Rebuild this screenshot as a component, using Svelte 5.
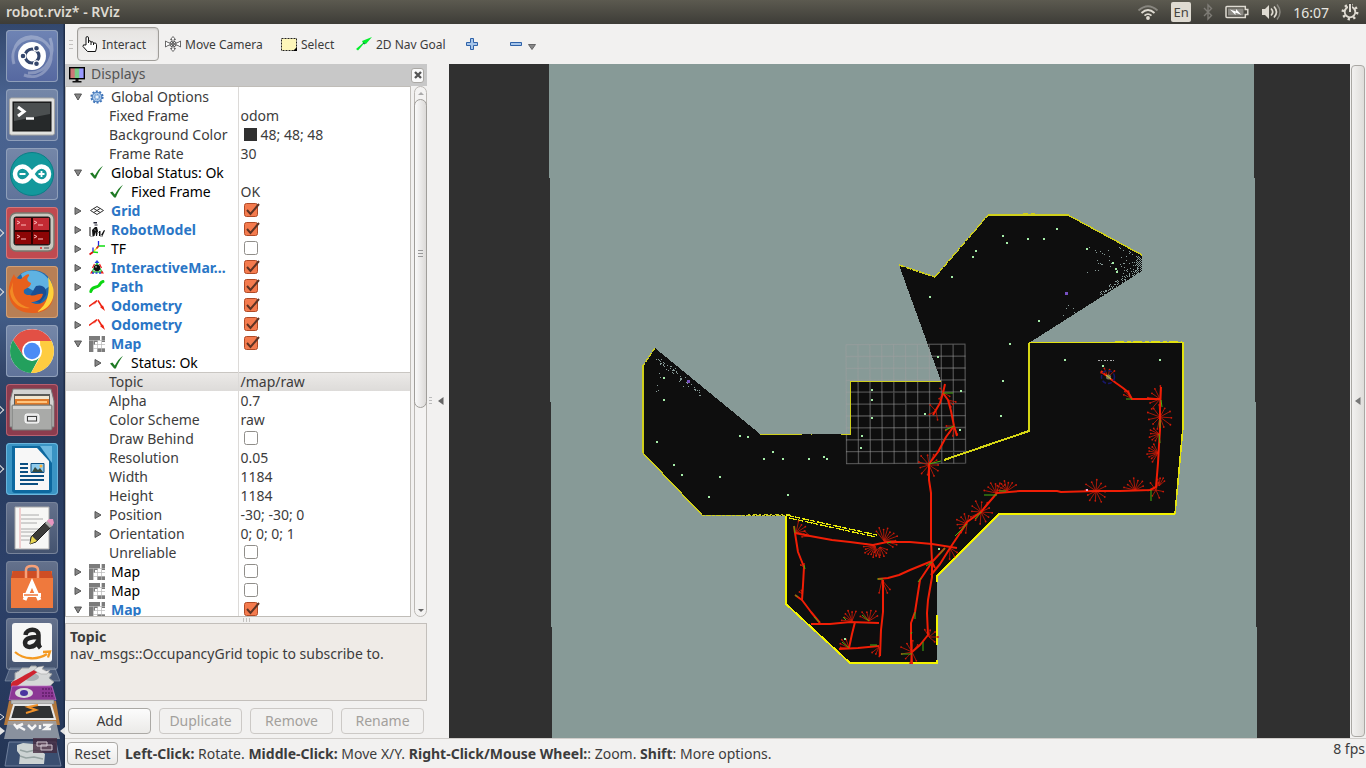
<script>
  const rows = [
    { n: 'Global Options', l: 0, a: 'open', i: 'gear' },
    { n: 'Fixed Frame', l: 1, v: 'odom' },
    { n: 'Background Color', l: 1, v: '48; 48; 48', swatch: true },
    { n: 'Frame Rate', l: 1, v: '30' },
    { n: 'Global Status: Ok', l: 0, a: 'open', i: 'ok', c: 'dark' },
    { n: 'Fixed Frame', l: 1, i: 'ok', c: 'dark', v: 'OK' },
    { n: 'Grid', l: 0, a: 'shut', i: 'grid', c: 'on', k: true },
    { n: 'RobotModel', l: 0, a: 'shut', i: 'robot', c: 'on', k: true },
    { n: 'TF', l: 0, a: 'shut', i: 'tf', c: 'dark', k: false },
    { n: 'InteractiveMar…', l: 0, a: 'shut', i: 'marker', c: 'on', k: true },
    { n: 'Path', l: 0, a: 'shut', i: 'path', c: 'on', k: true },
    { n: 'Odometry', l: 0, a: 'shut', i: 'odom', c: 'on', k: true },
    { n: 'Odometry', l: 0, a: 'shut', i: 'odom', c: 'on', k: true },
    { n: 'Map', l: 0, a: 'open', i: 'map', c: 'on', k: true },
    { n: 'Status: Ok', l: 1, a: 'shut', i: 'ok', c: 'dark' },
    { n: 'Topic', l: 1, v: '/map/raw', sel: true },
    { n: 'Alpha', l: 1, v: '0.7' },
    { n: 'Color Scheme', l: 1, v: 'raw' },
    { n: 'Draw Behind', l: 1, k: false },
    { n: 'Resolution', l: 1, v: '0.05' },
    { n: 'Width', l: 1, v: '1184' },
    { n: 'Height', l: 1, v: '1184' },
    { n: 'Position', l: 1, a: 'shut', v: '-30; -30; 0' },
    { n: 'Orientation', l: 1, a: 'shut', v: '0; 0; 0; 1' },
    { n: 'Unreliable', l: 1, k: false },
    { n: 'Map', l: 0, a: 'shut', i: 'map', c: 'dark', k: false },
    { n: 'Map', l: 0, a: 'shut', i: 'map', c: 'dark', k: false },
    { n: 'Map', l: 0, a: 'open', i: 'map', c: 'on', k: true }
  ];

  const apps = [
    { id: 'dash', name: 'Dash' },
    { id: 'term', name: 'Terminal' },
    { id: 'arduino', name: 'Arduino' },
    { id: 'terminator', name: 'Terminator', run: true },
    { id: 'firefox', name: 'Firefox', run: true },
    { id: 'chrome', name: 'Chrome' },
    { id: 'files', name: 'Files', run: true },
    { id: 'writer', name: 'Writer', run: true },
    { id: 'gedit', name: 'Text Editor' },
    { id: 'software', name: 'Software' },
    { id: 'amazon', name: 'Amazon' }
  ];

  const outline =
    '899,265 935,277 988,215 1068,215 1142,255 1142,271 1029,343 1183,342 1183,427 1175,514 999,514 937,576 937,663 850,663 786,604 786,516 702,515 643,453 643,366 655,348 760,434 850,434 850,381 941,381';

  const points = [
    [664,378],[664,400],[657,442],[674,465],[682,475],[709,497],[720,477],[740,436],[748,437],[764,459],
    [773,452],[783,459],[788,495],[809,459],[824,457],[827,459],[862,436],[861,448],[872,390],[872,400],
    [872,418],[925,414],[938,357],[961,391],[960,430],[1010,344],[1003,381],[1001,416],[1065,360],[1160,360],
    [1103,366],[1039,321],[1003,236],[1007,243],[1028,239],[1044,239],[1057,229],[1087,249],[976,251],
    [973,257],[952,277],[930,297],[1113,263],[1116,269],[1117,272],[939,549],[845,639]
  ];

  const tracks = [
    '945,384 943,393 940,403 933,415',
    '943,393 948,400 951,411 954,426 957,436',
    '954,426 946,437 938,452 929,464 929,480 931,493 931,540 932,562 935,568',
    '795,533 810,536 832,540 850,542 873,545 887,542 910,542 932,544 957,548',
    '794,526 795,533 798,552 804,567 803,585 802,600 811,612 820,623',
    '795,595 802,600',
    '811,624 830,624 850,622 879,623',
    '839,649 858,648 879,646',
    '855,622 852,634 849,648',
    '880,656 881,630 883,612 883,597 883,580',
    '878,579 888,578 899,575 910,570 932,561',
    '912,664 911,643 911,623 915,612 920,580 932,562 945,548',
    '932,562 932,577 928,600 927,613 928,635 920,645 912,652',
    '931,575 940,564 950,548 958,536 967,522 981,512 991,500 997,493 1020,491 1057,491 1061,492 1096,491 1120,491 1150,490 1156,487 1158,463 1159,445 1160,430 1160,410 1161,387',
    '1161,399 1148,399 1132,399 1128,392 1123,388 1116,383 1108,377 1101,371'
  ];

  const bursts = [
    [929,465,12,0,360,11],[981,512,12,0,360,12],[967,524,11,90,300,8],[996,493,12,180,330,6],[1007,491,11,185,350,7],
    [1096,491,12,0,360,12],[1135,490,12,185,350,7],[1156,490,9,0,330,6],[1160,399,13,130,300,6],[1160,417,13,0,360,11],
    [1159,434,10,110,240,6],[1158,453,11,110,250,8],[944,393,8,30,330,3],[948,400,8,10,90,3],[954,426,10,60,200,5],
    [950,548,11,20,110,3],[929,637,9,240,440,5],[912,652,12,60,340,8],[875,546,12,60,200,9],[884,541,14,220,400,10],
    [880,547,10,20,160,6],[852,621,11,180,310,6],[869,621,12,200,345,6],[796,533,12,270,380,5],[882,580,14,50,120,4],
    [849,648,11,180,270,4],[879,647,10,80,160,3],[1108,377,10,200,340,4],[936,411,9,80,300,3],[1131,398,9,200,270,3],
    [1159,486,9,250,330,4],[804,567,4,200,320,2],[802,594,4,220,300,2],[810,536,8,170,240,3]
  ];

  const rays = bursts.flatMap(([x, y, r, a, b, n], j) =>
    Array.from({ length: n }, (_, i) => {
      const t = ((a + ((b - a) * i) / n + (j % 4) * 4) * Math.PI) / 180;
      const q = r * (0.76 + ((i * 7 + j * 3) % 5) * 0.06);
      return [x, y, x + Math.cos(t) * q, y + Math.sin(t) * q];
    })
  );

  const greens = [
    '943,393 953,393','954,426 945,430','929,464 941,461','981,512 975,519','967,524 955,536','997,495 984,495',
    '1132,399 1126,399','1161,400 1162,407','1160,420 1160,428','1159,434 1160,443','1151,490 1151,501','794,526 795,533',
    '804,565 805,569','795,595 798,597','814,617 819,622','846,620 843,617','869,621 862,615','849,648 842,642',
    '870,645 877,645','883,579 877,579','932,562 926,566','939,555 945,548','921,578 918,582','915,612 915,619',
    '912,632 911,634','912,654 901,654','923,642 923,651','887,543 891,542','1006,491 999,491'
  ];

  function noise(seed) {
    let s = seed;
    return () => (s = (s * 16807) % 2147483647) / 2147483647;
  }

  // Unmapped cells: dense at the far right tip, thinning toward the room.
  const speckles = [];
  const r1 = noise(91);
  for (let x = 1120; x < 1142; x++) {
    const low = 271 + (1142 - x) * 0.637;
    const top = 255 - (1142 - x) * 0.54 + 3;
    for (let y = Math.ceil(top); y < low; y++) {
      const p = ((x - 1116) / 26) ** 2 * 0.42;
      if ((x + y) % 2 === 0 && r1() < p * 2) speckles.push([x, y]);
    }
  }
  for (let i = 0; i < 60; i++) {
    const x = 1100 + Math.round(38 * r1());
    speckles.push([x, Math.round(271 + (1142 - x) * 0.637 - 1 - 7 * r1())]);
  }
  for (let i = 0; i < 28; i++) speckles.push([Math.round(1086 + 38 * r1()), Math.round(246 + 30 * r1())]);
  for (let i = 0; i < 10; i++) speckles.push([Math.round(1058 + 30 * r1()), Math.round(316 - 14 * r1())]);
  for (let i = 0; i < 44; i++) {
    const u = r1();
    speckles.push([Math.round(655 + 45 * u), Math.round(354 + 36 * u + 6 * r1())]);
  }
  for (let i = 0; i < 14; i++) speckles.push([Math.round(653 + 32 * r1()), Math.round(362 + 30 * r1())]);

  const gridLines = Array.from({ length: 11 }, (_, i) => i);
</script>

{#snippet treeIcon(id)}
  <svg class="i16" viewBox="0 0 16 16" aria-hidden="true">
    {#if id === 'gear'}
      <circle cx="8" cy="8" r="5.6" fill="none" stroke="#3f74b8" stroke-width="2" stroke-dasharray="2 1.5" />
      <circle cx="8" cy="8" r="4.8" fill="#a9c7e8" stroke="#4379bd" />
      <circle cx="8" cy="8" r="2.6" fill="none" stroke="#5b8bc9" stroke-dasharray="1.4 1" />
      <circle cx="8" cy="8" r="1" fill="#fff" />
    {:else if id === 'ok'}
      <path d="M1 8.600 3.400 7.600 5.800 10.600C8 6.600 10.500 3.200 14 .800 11.200 4.800 8.800 8.800 6.800 13.600H5.200Z" fill="#1e7a24" />
    {:else if id === 'grid'}
      <path d="M1.500 7.500 8 3.500 14.500 7.500 8 11.500ZM4.700 5.500 11.200 9.500M11.200 5.500 4.700 9.500" fill="none" stroke="#333" />
    {:else if id === 'robot'}
      <path d="M4.500 0h3.500v1.500H4.500zM5.500 2.500h3v1h-3z" fill="#223" />
      <path d="M.500 5h1v9h-1zM3 8l3-3 2 0 1 4-1 5H7l-.500-4-1 4H3.500zM10 9h1.500v5H10zM12 13l3-5 1 .5-2.500 5.500z" fill="#111" />
      <path d="M5 7l2 1-1 1zM8 10h2v1H8zM11 14h3v.700h-3zM1 14h4v.700H1z" fill="#999" />
    {:else if id === 'tf'}
      <path d="M9.500 5.500V0" stroke="#22d" fill="none" stroke-width="1.300" /><path d="M9.500 5H16" stroke="#1d1" stroke-width="1.500" />
      <path d="M9.500 5.500 4.500 10.500" stroke="#ee2" stroke-width="1.500" /><path d="M9.500 5 7.500 7.500" stroke="#d22" stroke-width="1.500" />
      <path d="M4 11V6.500" stroke="#22d" stroke-width="1.300" /><path d="M4 11 9 11.500" stroke="#1d1" stroke-width="1.300" /><path d="M4 11 .5 13.500" stroke="#d11" stroke-width="1.800" />
    {:else if id === 'marker'}
      <path d="M3 12 8 3 13 12Z" fill="none" stroke="#28c040" stroke-width="1.300" />
      <path d="M8 0 10.500 3H5.500Z" fill="#24d" /><path d="m3.500 8 2-4M12.500 8l-2-4" stroke="#e22" stroke-width="1.200" /><path d="M1 13.500 3 10.500 4.500 13.500ZM15 13.500 13 10.500 11.500 13.500Z" fill="#e22" />
      <path d="M3 13h10" stroke="#24d" stroke-dasharray="2 1.500" stroke-width="1.500" />
      <circle cx="8" cy="8" r="3.200" fill="#111" /><circle cx="7" cy="6.800" r="1" fill="#999" />
    {:else if id === 'path'}
      <path d="M1.800 12.500C3 7 7 9.500 10 6.500 12 4 11.500 3 14 2.500" fill="none" stroke="#0cd512" stroke-width="3" stroke-linecap="round" />
    {:else if id === 'odom'}
      <path d="M0 8.500 8 2.500M9 2.500l5 8" fill="none" stroke="#e21" stroke-width="1.500" />
      <path d="M4 7 8.500 2 7 5ZM11 9 16 13 14 7.500Z" fill="#e21" />
    {:else if id === 'map'}
      <path d="M0 0h16v16H0z" fill="#fff" />
      <path d="M0 0h11v4H9v2H6v3H4v7H0zM13 0h3v6h-3zM8 12h8v4H8z" fill="#7c7c7c" />
      <path d="M4.500 4v12M8.500 4v12M12.500 0v16M4 8.500h12M4 12.500h12M0 4.500h16" stroke="#b9b9b9" stroke-width=".7" />
    {/if}
  </svg>
{/snippet}

{#snippet appIcon(id)}
  <svg viewBox="0 0 52 52" aria-hidden="true">
    {#if id === 'dash'}
      <path d="M8 34C2 14 22 2 38 11M18 45C36 52 50 34 44 16M44 8C50 24 42 44 22 43M9 18C14 4 34 2 44 18" fill="none" stroke="#fff" stroke-opacity=".28" stroke-width="3" />
      <circle cx="26" cy="26" r="14" fill="#fff" />
      <circle cx="26" cy="26" r="7" fill="none" stroke="#34466c" stroke-width="3.200" />
      <circle cx="17" cy="26" r="2.900" fill="#34466c" stroke="#fff" stroke-width="1.200" /><circle cx="30.500" cy="18.200" r="2.900" fill="#34466c" stroke="#fff" stroke-width="1.200" /><circle cx="30.500" cy="33.800" r="2.900" fill="#34466c" stroke="#fff" stroke-width="1.200" />
    {:else if id === 'term'}
      <rect x="3.500" y="9" width="45" height="37" rx="2" fill="#e1e1df" stroke="#a6a6a4" />
      <rect x="7" y="13" width="38" height="29" fill="#26292a" stroke="#111" /><path d="M8 14h36v11L8 32Z" fill="#4b4f50" />
      <path d="m12 18 6 4.500-6 4.500" fill="none" stroke="#fff" stroke-width="3" /><path d="M20 29.500h8" stroke="#fff" stroke-width="2.500" />
    {:else if id === 'arduino'}
      <circle cx="26" cy="26" r="21.500" fill="#13989c" stroke="#0a7f86" />
      <path d="M26 26C22 19.500 18.500 18.500 16.500 18.500a7.500 7.500 0 0 0 0 15C21 33.500 23.500 30 26 26S31 18.500 35.500 18.500a7.500 7.500 0 0 1 0 15C31 33.500 28.500 30 26 26Z" fill="none" stroke="#fff" stroke-width="4.500" />
      <path d="M13.500 26h6M32.500 26h6M35.500 23v6" stroke="#fff" stroke-width="1.800" />
    {:else if id === 'terminator'}
      <rect x="4" y="6" width="44" height="38" rx="6" fill="#c9c9c0" stroke="#78786e" stroke-width="1.500" />
      <rect x="8" y="10" width="36" height="28" rx="2" fill="#300" stroke="#222" /><path d="M9 11h16v12H9zM27 11h16v12H27z" fill="#c22a33" /><path d="M9 25h16v12H9zM27 25h16v12H27z" fill="#8c0505" />
      <path d="m11 14 3 1.500-3 1.500m4 1h5m8-4 3 1.500-3 1.500m4 1h5M11 28l3 1.500-3 1.500m4 1h5m8-4 3 1.500-3 1.500m4 1h5" fill="none" stroke="#fbb" stroke-width="1" />
      <circle cx="35" cy="41" r="1" fill="#e22" /><path d="M38 41h5" stroke="#777" stroke-width="1.500" />
    {:else if id === 'firefox'}
      <circle cx="27" cy="24" r="20" fill="#2168ab" /><path d="M15 8C27 0 42 7 45 19L33 28 19 20Z" fill="#5fb2e2" /><path d="M30 20c7-2 11 2 10 9l-6 8-12-4Z" fill="#1a4f93" />
      <path d="M8 8C9 12 12 13 15 13 20 8 24 7 23 10 20 13 21 15 25 17 25 21 20 22 18 24 17 28 20 29 24 29 29 31 32 27 37 28 36 34 30 36 25 36 36 43 47 31 43 14 51 25 50 47 26 47 3 47-3 26 8 8Z" fill="#e8601c" />
      <path d="M42 11C52 24 49 42 31 46 42 38 44 27 42 11Z" fill="#ffd23b" /><path d="M7 16C5 29 11 39 24 42 15 44 4 36 4 25Z" fill="#f28a25" />
    {:else if id === 'chrome'}
      <circle cx="26" cy="26" r="22" fill="#fff" /><path d="M7 15A22 22 0 0 1 45.500 16H26L17.400 31Z" fill="#e25045" /><path d="M7 15A22 22 0 0 0 25 48L34 31 26 36 17.400 31Z" fill="#23a05d" />
      <path d="M45.500 16A22 22 0 0 1 25 48L34.700 31 34 16Z" fill="#fecc40" /><circle cx="26" cy="26" r="10" fill="#fff" /><circle cx="26" cy="26" r="8.200" fill="#4b8bf5" />
    {:else if id === 'files'}
      <path d="M7 5h38l3 12v26H4V17Z" fill="#d3d3d1" stroke="#777" /><path d="M8 10h36v12H8z" fill="#5c5c58" />
      <path d="M9 12h34v3H9z" fill="#f1e6cf" /><path d="M9 15h34v8H9z" fill="#df7a2a" /><path d="M11 18h30" stroke="#ffc37b" stroke-width="2" />
      <rect x="6" y="21" width="40" height="25" rx="1" fill="#a9aaa8" stroke="#737472" /><path d="M7 22h38v3H7z" fill="#d4d4d2" />
      <rect x="19" y="30" width="14" height="9" rx="2" fill="#ddd" stroke="#fff" /><rect x="21.500" y="32.500" width="9" height="4.500" fill="#eee" stroke="#444" />
    {:else if id === 'writer'}
      <path d="M6 3h32l8 10v34a3 3 0 0 1-3 3H9a3 3 0 0 1-3-3Z" fill="#0d689f" /><path d="M34 3h12v17Z" fill="#6db9e0" /><path d="M9 5h22l12 13v29H9Z" fill="#f7f7f7" />
      <path d="M14 21h8M14 25h8M14 29h8M14 33h24M14 37h24M14 41h18" stroke="#0b4f82" stroke-width="2" /><path d="M25 20.500h13v9H25z" fill="#8ecbed" stroke="#0b4f82" /><path d="m26 29 3-5 3 3 2-2 3 4Z" fill="#374b40" /><circle cx="35" cy="23" r="1.500" fill="#ffb43b" />
    {:else if id === 'gedit'}
      <path d="M9 5h34v42H9z" fill="#f7f7f5" stroke="#aaa" /><path d="M14 6v40" stroke="#eaa7aa" /><path d="M15 13h18M15 17h22M15 21h16M15 27h20M15 30h18M15 34h14M15 38h12" stroke="#aaa" />
      <path d="M25 35 40 20 45 25 30 40 24 42Z" fill="#3c3c3a" stroke="#222" /><path d="m26 34 5 5-7 3Z" fill="#e8d651" /><path d="m39 21 3-3 5 5-3 3Z" fill="#aaa" /><path d="m41 19 2-2 4 0 1 4-2 3Z" fill="#e895c0" />
    {:else if id === 'software'}
      <path d="M6 10h40v36H5z" fill="#e96a30" /><path d="M5 17h42v30H5z" fill="#ef793d" /><path d="M5 17 7 10h38l2 7Z" fill="#cf4e24" /><path d="M20 17V9q0-4 6-4t6 4v8" fill="none" stroke="#f6a078" stroke-width="2.500" />
      <path d="M18.500 39 26 22l7.500 17" fill="none" stroke="#fff" stroke-width="4" /><path d="M17 34h18" stroke="#fff" stroke-width="4" /><path d="M18 34h14" stroke="#ef793d" stroke-width="1.500" />
    {:else if id === 'amazon'}
      <rect x="6" y="5" width="40" height="39" rx="3" fill="#f7f7f6" />
      <path d="M19.500 17c1-7 13-7 13 0v8c0 3 1 4 2 5M32 19c-9 0-13 2-13 6 0 6 10 5 13-2" fill="none" stroke="#262626" stroke-width="4.500" />
      <path d="M9 34c9 8 23 8 32 2M37 34l7-.500-2 6" fill="none" stroke="#f49a22" stroke-width="2.300" />
    {/if}
  </svg>
{/snippet}

<div class="desktop">
  <header class="topbar">
    <h1>robot.rviz* - RViz</h1>
    <div class="tray">
      <svg width="22" height="18" viewBox="0 0 22 18" fill="none" stroke="#dfdbd2" stroke-width="1.800"><path d="M1.500 7.500Q11-1 20.500 7.500" stroke="#88867f" /><path d="M4.500 10Q11 4 17.500 10" /><path d="M7.500 12.700Q11 9.500 14.500 12.700" /><circle cx="11" cy="15" r="1" fill="#dfdbd2" /></svg>
      <span class="lang">En</span>
      <svg width="10" height="18" viewBox="0 0 10 18" fill="none" stroke="#7e7c76" stroke-width="1.400"><path d="M1 5 8.500 12.500 5 16V2L8.500 5.500 1 13" /></svg>
      <svg width="24" height="14" viewBox="0 0 24 14"><path d="M1.800 1.500h18.500v3h2.500v5h-2.500v3H1.800Q1 12.500 1 11.500v-9Q1 1.500 1.800 1.500Z" fill="none" stroke="#dfdbd2" stroke-width="1.500" /><path d="M3 3.500h15.500v7H3z" fill="#8c8a84" /><path d="m5 4.500 6 2V4l5.500 6-6-2.500v2.500Z" fill="#fff" /></svg>
      <svg width="20" height="18" viewBox="0 0 20 18"><path d="M1 6h3l4-4v14l-4-4H1z" fill="#dfdbd2" /><path d="M10 5.500q3.500 3.500 0 7M13 3.500q5 5.500 0 11" fill="none" stroke="#dfdbd2" stroke-width="1.700" /><path d="M16 1.500q6 7.500 0 15" fill="none" stroke="#88867f" stroke-width="1.500" /></svg>
      <time>16:07</time>
      <svg width="18" height="18" viewBox="0 0 18 18"><circle cx="9" cy="9" r="7.200" fill="none" stroke="#dfdbd2" stroke-width="2.500" stroke-dasharray="2.300 3.350" /><circle cx="9" cy="9" r="5.300" fill="none" stroke="#dfdbd2" stroke-width="1.800" /><path d="M7 0h4v8H7z" fill="#4a4943" /><path d="M9 1v8" stroke="#dfdbd2" stroke-width="2" /></svg>
    </div>
  </header>

  <div class="body">
    <nav class="launcher" aria-label="Launcher">
      {#each apps as app}
        <button class="tile {app.id}" class:run={app.run} aria-label={app.name}>{@render appIcon(app.id)}</button>
      {/each}
      <svg class="stack" viewBox="0 0 65 98" aria-hidden="true">
        <path d="M10 0h45l5 13H5Z" fill="#8490a6" fill-opacity=".4" stroke="#9aa8bd" stroke-opacity=".5" />
        <path d="m15 5 4-2 3-3h7l2-2h5l2 3 5 0 4 3 5 2-3 4 5 4-4 4-7 1-3 2H19l-4-3-4-3 4-4Z" fill="#d5d7d7" stroke="#9a9ea0" /><ellipse cx="31" cy="9" rx="8" ry="4" fill="#aab0b4" />
        <path d="M11 16Q12 13 16 12L34 2l5 1L20 16 14 20Q10 20 11 16Z" fill="#cf2430" /><path d="m34 2 4-3 6-1-2 3 4 2 4-1-3 4-6 0-4-2Z" fill="#e8e8e8" stroke="#999" stroke-width=".5" />
        <path d="M12 18h40l4 14H9Z" fill="#8c3795" stroke="#c374c9" stroke-width=".7" /><ellipse cx="24" cy="25" rx="9" ry="5" fill="#dadada" /><ellipse cx="24" cy="25" rx="4" ry="3" fill="#4b349f" /><path d="M42 21h10M42 25h11M42 28h12" stroke="#4b1353" stroke-dasharray="2 1" />
        <path d="M9 33h47l4 24H4Z" fill="#b5793c" /><path d="M11 32h43v4H11z" fill="#bbb" stroke="#777" stroke-width=".6" />
        <path d="M14 37h37l4 14H10Z" fill="#2f3133" stroke="#e7e7e7" stroke-width="2" /><path d="M38 37 28 39l8 3-10 3" fill="none" stroke="#f0912a" stroke-width="2" />
        <path d="M8 53h48l4 18H4Z" fill="#9ba1aa" fill-opacity=".85" /><path d="m14 56 4 5m5-5-5 2 7 4m3-5 4 4 4-4m4 0v4m3-4h7l-5 4h6" fill="none" stroke="#f5f5f5" stroke-width="2.500" />
        <path d="M9 74h47l5 24H5Z" fill="#3a4e70" stroke="#6f7f9c" /><path d="m17 77 6-2 12 1 8 1-2 6 4 3-1 10H19l1-9-3-4Z" fill="#cdd3d3" /><path d="m20 82 7 2 8-2 7 2M20 88l6 2 8-1 9 2" fill="none" stroke="#97a3a2" stroke-width="1.500" />
        <path d="M33 70h24v15H33z" fill="#452b40" fill-opacity=".8" /><path d="M37 74h10v4H37zM41 77h11v5H41z" fill="#604a5c" stroke="#d4c8d2" />
        <path d="m0 46 4 3-4 3" fill="none" stroke="#e4e4e4" /><path d="m0 59 5 4-5 4zM65 59l-5 4 5 4z" fill="#e4e4e4" />
      </svg>
    </nav>

    <main class="window">
      <div class="toolbar" role="toolbar">
        <i class="grip"></i>
        <button class="tool interact active"><svg class="i16" viewBox="0 0 16 16"><path d="M4 9V2q0-1.500 1.200-1.500T6.500 2v5V5q2-1 2.500 1 2-1 2.500 1 3-.5 3 1.500V12l-1 3.500H5.500L1 10.500Q.500 8 4 9Z" fill="#fff" stroke="#111" /><path d="M9 6v3M11.500 7v2" stroke="#111" /></svg>Interact</button>
        <button class="tool camera"><svg class="i16" viewBox="0 0 16 16" fill="#fff" stroke="#444" stroke-width=".8"><circle cx="8" cy="8" r="3" /><path d="M8 .500 10.500 3.500H9V6H7V3.500H5.500ZM8 15.500 10.500 12.500H9V10H7v2.500H5.500ZM.500 8V5L3 6.500 5 7v2l-2 .5L.5 11ZM15.500 8V5L13 6.500 11 7v2l2 .5 2.500 1.500Z" /><circle cx="8" cy="8" r="1.500" fill="#888" /></svg>Move Camera</button>
        <button class="tool select"><svg class="i16" viewBox="0 0 16 16"><rect x=".500" y="2.500" width="15" height="12" fill="#fdf6b9" stroke="#222" stroke-dasharray="2 1" /><path d="M16 11v4h-4z" fill="#000" /></svg>Select</button>
        <button class="tool nav"><svg class="i16" viewBox="0 0 16 16"><path d="m0 13 7-6-1-2 10-4-6 7-2-.5L2 14.500Z" fill="#05ee2d" /><path d="m7 7 2 1" stroke="#064" /></svg>2D Nav Goal</button>
        <button class="tool plus" aria-label="Add tool"><svg class="i12" viewBox="0 0 12 12"><path d="M4.500.500h3v4h4v3h-4v4h-3v-4h-4v-3h4z" fill="#a6c5ea" stroke="#2f62a8" /></svg></button>
        <button class="tool minus" aria-label="Remove tool"><svg class="i12" viewBox="0 0 12 12"><path d="M.500 4.500h11v3H.500z" fill="#a6c5ea" stroke="#2f62a8" /></svg><svg class="drop" viewBox="0 0 8 6"><path d="M.500.500h7L4 5.500Z" fill="#888" stroke="#666" /></svg></button>
      </div>

      <div class="content">
        <section class="panel">
          <div class="head">
            <svg class="i16" viewBox="0 0 16 16"><defs><linearGradient id="scr"><stop offset=".3" stop-color="#c77" /><stop offset=".4" stop-color="#7c8" /><stop offset=".6" stop-color="#7c8" /><stop offset=".7" stop-color="#99f" /></linearGradient></defs><rect x=".700" y=".700" width="14.600" height="11" fill="url(#scr)" stroke="#000" stroke-width="1.400" /><path d="M6.500 12h3v2h3v1.500h-9V14h3z" fill="#111" /></svg>
            <h2>Displays</h2>
            <button class="close" aria-label="Close"><svg viewBox="0 0 8 8"><path d="m1 1 6 6M7 1 1 7" stroke="#555" stroke-width="2.400" /></svg></button>
          </div>
          <div class="treewrap">
            <div class="tree">
              <table>
                <colgroup><col class="names" /><col /></colgroup>
                <tbody>
                  {#each rows as r, i}
                    <tr class:sel={r.sel}>
                      <th scope="row"><div class="cell {r.c ?? ''}" class:sub={r.l === 1}>
                        <span class="arrow">{#if r.a}<svg viewBox="0 0 8 8"><path d={r.a === 'open' ? 'M.500 1h7L4 7Z' : 'M1 .500v7L7 4Z'} fill="#858585" stroke="#555" /></svg>{/if}</span>
                        {#if r.i}{@render treeIcon(r.i)}{/if}
                        <span id="p{i}">{r.n}</span>
                      </div></th>
                      <td><div class="value">
                        {#if r.swatch}<i class="swatch"></i>{/if}
                        {#if r.k !== undefined}<input type="checkbox" checked={r.k} aria-labelledby="p{i}" />{:else}{r.v ?? ''}{/if}
                      </div></td>
                    </tr>
                  {/each}
                </tbody>
              </table>
            </div>
            <div class="scroll">
              <i class="up"></i>
              <div class="thumb"><i></i></div>
              <i class="down"></i>
            </div>
          </div>
          <div class="split"><i></i></div>
          <div class="desc"><b>Topic</b><p>nav_msgs::OccupancyGrid topic to subscribe to.</p></div>
          <div class="actions">
            <button class="btn">Add</button>
            <button class="btn" disabled>Duplicate</button>
            <button class="btn" disabled>Remove</button>
            <button class="btn" disabled>Rename</button>
          </div>
        </section>

        <button class="collapse" aria-label="Hide left dock"><i></i><svg viewBox="0 0 6 8"><path d="M5.500 0v8L0 4Z" fill="#666" /></svg></button>

        <svg class="view" viewBox="449 64 901 674" preserveAspectRatio="xMidYMid slice" role="img" aria-label="Map view">
          <g shape-rendering="crispEdges">
            <path d="M549 64H1254L1257 738H552Z" fill="#879a97" />
            <polygon points={outline} fill="#0e0e0e" />
            {#each speckles as [x, y]}<rect {x} {y} width="1" height="1" fill="#879a97" />{/each}
          </g>
          <g stroke="#a0a0a0" stroke-opacity=".45" stroke-width="1.300">
            {#each gridLines as g}
              <path d="M{846 + g * 11.9} 344.500L{846.6 + g * 11.9} 463.500M846 {344.6 + g * 11.9}L965.500 {344.2 + g * 11.9}" />
            {/each}
          </g>
          <g fill="none" shape-rendering="crispEdges">
            <path d="M899 265 935 277" stroke="#cfcf1c" stroke-width="1.400" stroke-dasharray="6 1" />
            <path d="M935 277 988 215" stroke="#cfcf1c" stroke-width="1.400" stroke-dasharray="7 1 4 1" />
            <path d="M988 215H1068L1142 255" stroke="#cfcf1c" stroke-width="1.400" />
            <path d="M989 214h3M1023 213h5m3 0h4m2 1h4M1054 214h2" stroke="#cfcf1c" />
            <path d="M655 348 643 366" stroke="#cfcf1c" stroke-width="1.400" stroke-dasharray="5 1" />
            <path d="M643 366V453L702 515" stroke="#cfcf1c" stroke-width="1.400" />
            <path d="M702 515.500H786" stroke="#cfcf1c" stroke-dasharray="3 1 5 1" />
            <path d="M748 514.500H790" stroke="#cfcf1c" stroke-dasharray="2 3 4 2" />
            <path d="M760 434.500H802M811 434.500H812M841 434.500H850.500V381.500H941" stroke="#cfcf1c" stroke-width="1.500" />
            <path d="M1029 343V431L944 460" stroke="#d6d614" stroke-width="2" />
            <path d="M1029 342.500H1183V427L1175 514" stroke="#e2e210" stroke-width="1.600" />
            <path d="M1115 341.500h67" stroke="#e2e210" stroke-dasharray="9 3 4 2" />
            <path d="M1127 343.500h52" stroke="#0e0e0e" stroke-dasharray="5 7" />
            <path d="M1175 514H999L937 576V582M937 615V645M937 660V663H850L786 604V516" stroke="#f4f400" stroke-width="1.800" />
            <path d="M786 515 877 535M789 518 876 537" stroke="#eaea08" stroke-dasharray="8 1 5 2" stroke-width="1.300" />
          </g>
          <g fill="none" stroke-linejoin="round">
            <g stroke="#cc1a08" stroke-width=".8">
              {#each rays as [x1, y1, x2, y2]}<line {x1} {y1} {x2} {y2} />{/each}
            </g>
            {#each rays as [, , x, y]}<circle cx={x} cy={y} r=".9" fill="#cc1a08" />{/each}
            {#each tracks as t}<polyline points={t} stroke="#f01e06" stroke-width="2" />{/each}
            {#each greens as t}<polyline points={t} stroke="#48b010" stroke-width="1" />{/each}
          </g>
          <circle cx="1108" cy="377" r="6.500" fill="none" stroke="#171768" stroke-width="1.500" stroke-dasharray="4 2" />
          <circle cx="1108.500" cy="377" r="2.500" fill="#77745c" /><path d="M1106 375l5 4" stroke="#d8c620" />
          <g shape-rendering="crispEdges" fill="#a5eda8">
            {#each points as [x, y]}<rect x={x - 1} y={y - 1} width="2" height="2" />{/each}
            <rect x="687" y="380" width="3" height="3" fill="#7650c0" /><rect x="1065" y="292" width="3" height="3" fill="#7650c0" /><rect x="1086" y="489" width="2" height="2" fill="#e6a5d4" />
            <path d="M1098 360.500h16" stroke="#aaa" stroke-dasharray="2 1 1 2" />
          </g>
        </svg>

        <button class="rightdock" aria-label="Hide right dock"><svg viewBox="0 0 6 8"><path d="M5.500 0v8L0 4Z" fill="#777" /></svg></button>
      </div>

      <footer class="status">
        <button class="btn reset">Reset</button>
        <p><b>Left-Click:</b> Rotate. <b>Middle-Click:</b> Move X/Y. <b>Right-Click/Mouse Wheel:</b>: Zoom. <b>Shift</b>: More options.</p>
        <span class="fps">8 fps</span>
      </footer>
    </main>
  </div>
</div>

<style>
  :global(body) { margin: 0; }
  * { box-sizing: border-box; }
  .desktop { height: 100vh; display: flex; flex-direction: column; overflow: hidden; font: 14px/19px "Noto Sans", "Open Sans", sans-serif; color: #3c3c3c; background: #f2f1f0; }
  button { font: inherit; color: inherit; margin: 0; padding: 0; border: 0; background: none; }
  h1, h2, p { margin: 0; font-size: 14px; }
  svg { display: block; flex: none; }
  .i16 { width: 16px; height: 16px; }
  .i12 { width: 12px; height: 12px; }

  .topbar { flex: none; height: 24px; display: flex; align-items: center; justify-content: space-between; padding: 0 7px 0 6px; color: #dfdbd2; background: linear-gradient(#5c5a50, #3d3c37); }
  h1 { font-size: 14px; line-height: 22px; font-weight: 600; }
  .tray { display: flex; align-items: center; gap: 12px; }
  .lang { width: 20px; height: 20px; border-radius: 2px; background: #dfdbd2; color: #45443f; font-size: 13px; line-height: 20px; text-align: center; }
  time { color: #e8e6e0; }

  .body { flex: 1; min-height: 0; display: flex; }
  .launcher { flex: none; width: 65px; padding: 6px 0 0 6px; display: flex; flex-direction: column; gap: 7px; overflow: hidden; background: linear-gradient(90deg, transparent 63px, #1d2c48 64px), linear-gradient(#33486e 0, #4a6390 10%, #44608c 38%, #35486c 46%, #263a5c 55%, #2d416a 75%, #243555); }
  .tile { position: relative; flex: none; width: 52px; height: 52px; border-radius: 4px; background: linear-gradient(#7587a8, #60739a); box-shadow: inset 0 0 0 1px #8f9fba; }
  .tile svg { width: 52px; height: 52px; }
  .dash { background: linear-gradient(#6f84b4, #5668a0); }
  .terminator { background: #c04a50; box-shadow: inset 0 0 0 1px #d4777a; }
  .firefox { background: #b87f55; box-shadow: inset 0 0 0 1px #d0a078; }
  .files { background: #8b3c4e; box-shadow: inset 0 0 0 1px #b56070; }
  .writer { background: #3a94c4; box-shadow: inset 0 0 0 1px #69b5dc; }
  .gedit, .software, .amazon { background: linear-gradient(#65728d, #44536f); box-shadow: inset 0 0 0 1px #77839a; }
  .amazon { margin-top: -2px; }
  .run::before { content: ""; position: absolute; left: -9px; top: 23px; width: 5px; height: 5px; border: solid #ddd; border-width: 1px 1px 0 0; transform: rotate(45deg); }
  .stack { position: relative; width: 65px; height: 98px; margin: -9px 0 0 -6px; overflow: visible; }

  .window { flex: 1; min-width: 0; display: flex; flex-direction: column; }
  .toolbar { flex: none; height: 40px; display: flex; align-items: center; padding-left: 4px; font-size: 12px; }
  .grip { width: 4px; height: 9px; margin-right: 4px; background: repeating-linear-gradient(#c4c2c0 0 1px, transparent 1px 4px); }
  .tool { height: 34px; padding: 0 5px; display: flex; align-items: center; gap: 4px; white-space: nowrap; }
  .interact { width: 82px; margin-right: 1px; }
  .camera { width: 116px; }
  .select { width: 75px; }
  .nav { width: 105px; }
  .plus { width: 44px; padding: 0 10px; }
  .minus { padding: 0 10px; gap: 6px; }
  .drop { width: 8px; height: 6px; margin-top: 6px; }
  .active { border: 1px solid #a09e9a; border-radius: 4px; background: linear-gradient(#e6e4e2, #f1f0ef); box-shadow: inset 0 1px 2px #c8c6c4; padding-left: 4px; }

  .content { flex: 1; min-height: 0; display: flex; }
  .panel { flex: none; width: 362px; display: flex; flex-direction: column; }
  .head { flex: none; height: 22px; display: flex; align-items: center; gap: 6px; padding: 0 3px 0 4px; background: #c8c8c8; }
  h2 { flex: 1; line-height: 18px; padding-bottom: 2px; font-weight: 400; color: #555; }
  .close { width: 13px; height: 15px; border: 1px solid #aaa8a4; border-radius: 3px; background: #fafafa; display: grid; place-items: center; }
  .close svg { width: 8px; height: 8px; }
  .treewrap { flex: 1; min-height: 0; display: flex; gap: 3px; }
  .tree { flex: 1; overflow: hidden; background: #fff; border: 1px solid #c0bdb8; }
  table { width: 100%; border-collapse: collapse; table-layout: fixed; }
  .names { width: 172px; }
  th, td { padding: 0; height: 19px; font-weight: 400; text-align: left; white-space: nowrap; }
  th { border-right: 1px solid #dcdad8; }
  .cell { height: 19px; padding-left: 2px; display: flex; align-items: center; }
  .cell.sub { padding-left: 22px; }
  .cell .i16 { margin-right: 6px; }
  .arrow { width: 21px; padding-left: 6px; flex: none; }
  .arrow svg { width: 8px; height: 8px; }
  .dark { color: #000; }
  .on { color: #2a76c6; font-weight: 700; }
  .value { height: 19px; padding-left: 2px; display: flex; align-items: center; }
  .swatch { width: 13px; height: 13px; margin: 0 4px 0 3px; background: #303030; }
  .sel { background: linear-gradient(#eceae8, #dddbd9); box-shadow: inset 0 1px 0 #c9c6c2; }
  input { appearance: none; width: 16px; height: 16px; margin: 0 0 0 3px; background: url("data:image/svg+xml,%3Csvg xmlns='http://www.w3.org/2000/svg' viewBox='0 0 16 16'%3E%3Crect x='.5' y='.5' width='13' height='13' rx='2' fill='%23fff' stroke='%23908e8a'/%3E%3C/svg%3E"); }
  input:checked { background-image: url("data:image/svg+xml,%3Csvg xmlns='http://www.w3.org/2000/svg' viewBox='0 0 16 16'%3E%3Crect x='.5' y='.5' width='13' height='13' rx='2' fill='%23f47b4e' stroke='%23b04a26'/%3E%3Cpath d='M3 7 6.500 11 15 1' fill='none' stroke='%235e3324' stroke-width='2'/%3E%3C/svg%3E"); }
  .scroll { flex: none; width: 13px; display: flex; flex-direction: column; border: 1px solid #bbb8b4; border-radius: 7px; background: #f4f3f2; }
  .up, .down { flex: none; height: 12px; display: grid; place-items: center; }
  .up::after, .down::after { content: ""; border: solid transparent; border-width: 0 3px 3px; border-bottom-color: #aaa; }
  .down::after { border-width: 3px 3px 0; border-top-color: #666; }
  .thumb { height: 309px; margin: 0 -1px; border: 1px solid #a09e9a; border-radius: 7px; background: linear-gradient(90deg, #fafafa, #dcdad8); display: grid; place-items: center; }
  .scroll .down { margin-top: auto; }
  .thumb i { width: 5px; height: 8px; background: repeating-linear-gradient(#999 0 1px, transparent 1px 3px); }
  .split { flex: none; height: 6px; display: grid; place-items: center; }
  .split i { width: 7px; height: 4px; background: repeating-linear-gradient(90deg, #c4c2c0 0 1px, transparent 1px 3px); }
  .desc { flex: none; height: 78px; padding: 4px; line-height: 17px; border: 1px solid #c3bfbb; background: #efebe7; }
  .actions { flex: none; display: grid; grid-template-columns: repeat(4, 1fr); gap: 8px; padding: 7px 3px 4px; }
  .btn { height: 26px; line-height: 22px; border: 1px solid #aba9a5; border-radius: 4px; background: linear-gradient(#fcfcfc, #ebeae8); }
  .btn:disabled { color: #a3a09c; border-color: #ccc9c6; background: #f2f1f0; }
  .collapse { flex: none; width: 22px; padding-right: 3px; display: flex; align-items: center; justify-content: center; gap: 6px; }
  .collapse i { width: 3px; height: 8px; background: repeating-linear-gradient(#bbb 0 1px, transparent 1px 3px); }
  .collapse svg, .rightdock svg { width: 6px; height: 8px; }
  .view { flex: 1; min-width: 0; width: 100%; height: 100%; background: #303030; }
  .rightdock { flex: none; width: 14px; margin: 1px; border: 1px solid #aaa8a4; border-radius: 4px; background: linear-gradient(90deg, #f2f1f0, #dfddda); display: grid; place-items: center; }
  .status { flex: none; height: 30px; display: flex; align-items: center; gap: 7px; padding: 0 1px 0 2px; border-top: 1px solid #d0cdca; }
  .status p { flex: 1; }
  .reset { width: 51px; height: 23px; line-height: 20px; }
  .fps { align-self: flex-start; }
</style>
